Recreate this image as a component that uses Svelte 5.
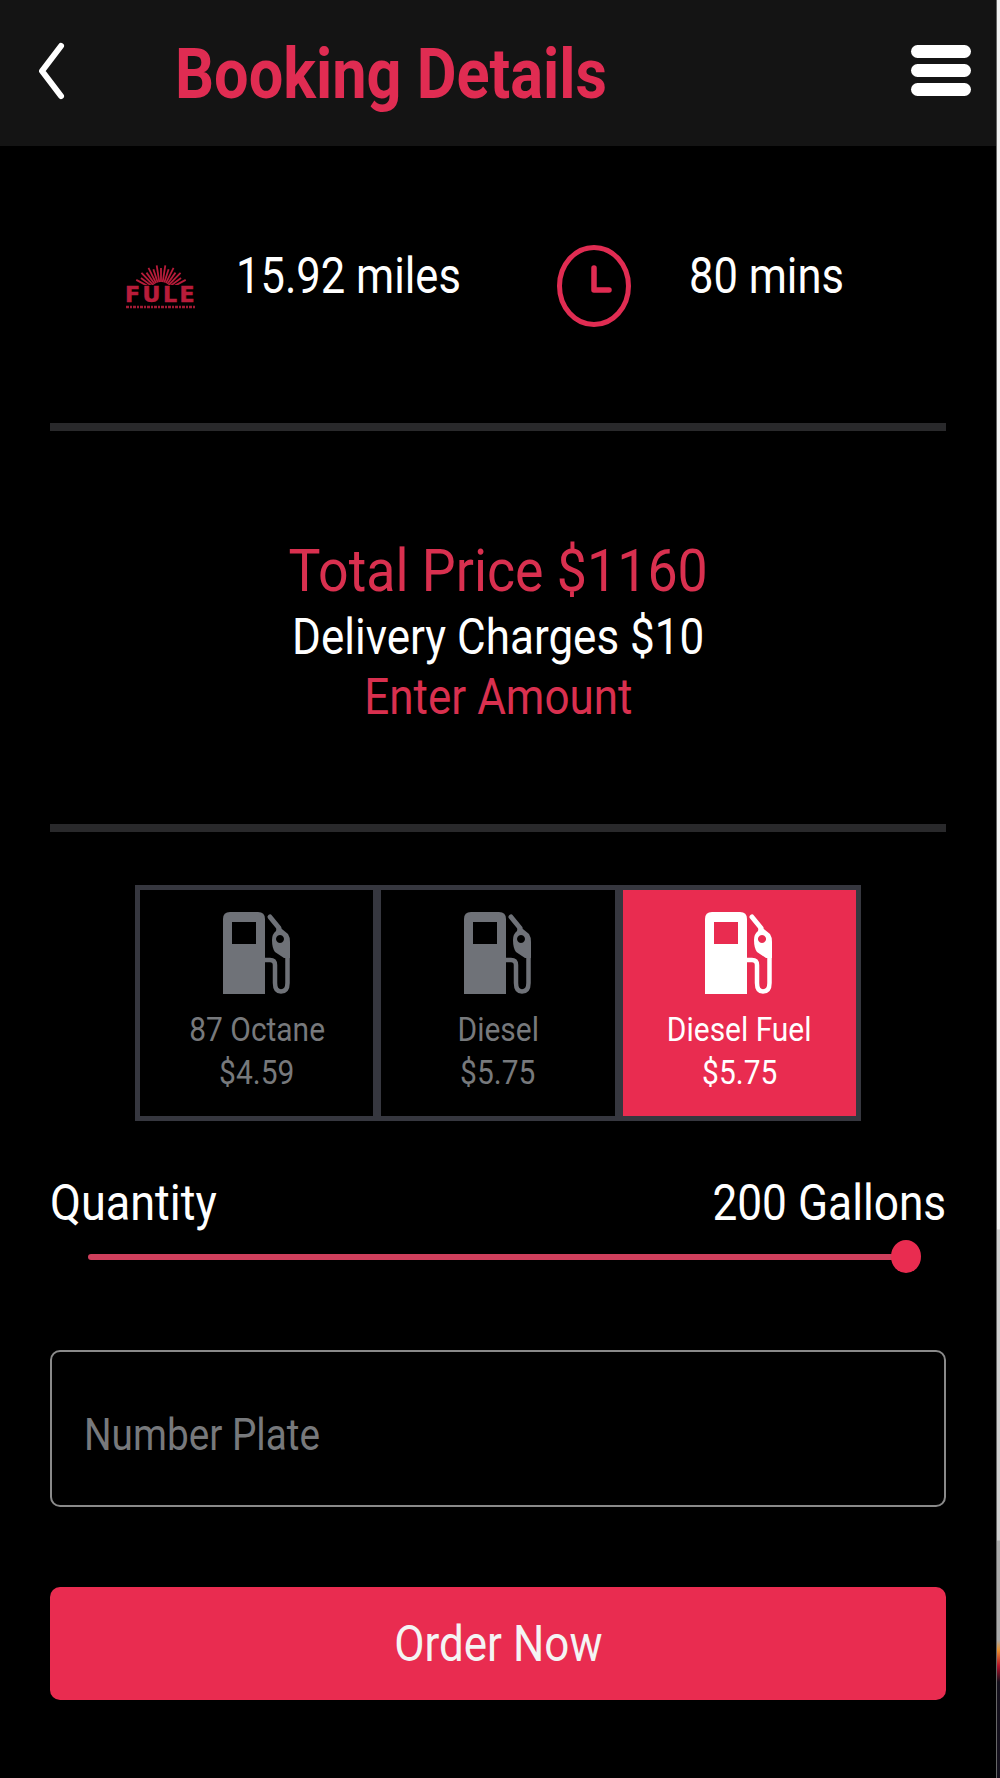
<script>
	const fuels = [
		{ name: '87 Octane', price: '$4.59', active: false },
		{ name: 'Diesel', price: '$5.75', active: false },
		{ name: 'Diesel Fuel', price: '$5.75', active: true }
	];

	// rays of the little sunburst in the logo
	const rays = Array.from({ length: 15 }, (_, i) => {
		const a = ((-152 + (i * 124) / 14) * Math.PI) / 180;
		return {
			x1: 36 + Math.cos(a) * 11,
			y1: 28 + Math.sin(a) * 11,
			x2: 36 + Math.cos(a) * (i % 2 ? 25 : 28),
			y2: 28 + Math.sin(a) * (i % 2 ? 25 : 28)
		};
	});
</script>

<div class="screen">
	<div class="page">
		<header class="topbar">
			<button class="back" aria-label="Back">
				<svg width="30" height="58" viewBox="0 0 30 58" fill="none">
					<path d="M25 4 L6 29 L25 54" stroke="#fff" stroke-width="6" stroke-linecap="round" stroke-linejoin="round" />
				</svg>
			</button>
			<h1><span class="narrow">Booking Details</span></h1>
			<div class="burger"><span></span><span></span><span></span></div>
		</header>

		<main class="content">
			<section class="stats">
				<div class="logo">
					<svg width="72" height="44" viewBox="0 0 72 44">
						{#each rays as r}
							<line x1={r.x1} y1={r.y1} x2={r.x2} y2={r.y2} stroke="#b81c3a" stroke-width="1.8" />
						{/each}
						<line x1="1" y1="42" x2="71" y2="42" stroke="#a01a34" stroke-width="2.5" stroke-dasharray="3 1 2 1" />
					</svg>
					<span class="logo-word">FULE</span>
				</div>
				<span class="stat miles narrow">15.92 miles</span>
				<svg class="clock" width="74" height="82" viewBox="0 0 74 82" fill="none">
					<ellipse cx="37" cy="41" rx="34.5" ry="38.5" stroke="#e02c52" stroke-width="5" />
					<path d="M37 23 V45 H52" stroke="#e02c52" stroke-width="5.5" stroke-linecap="round" stroke-linejoin="round" />
				</svg>
				<span class="stat mins narrow">80 mins</span>
			</section>

			<hr />

			<section class="totals">
				<div class="total"><span class="narrow mid">Total Price $1160</span></div>
				<div class="delivery"><span class="narrow mid">Delivery Charges $10</span></div>
				<div class="enter"><span class="narrow mid">Enter Amount</span></div>
			</section>

			<hr />

			<section class="fuels">
				{#each fuels as fuel}
					<div class="fuel" class:active={fuel.active}>
						<svg width="68" height="82" viewBox="0 0 68 82" fill="none">
							<path fill-rule="evenodd" fill="currentColor" d="M7 0 H35 Q42 0 42 7 V82 H0 V7 Q0 0 7 0 Z M9 10 V32 H33 V10 Z" />
							<path d="M47 5 L56 16" stroke="currentColor" stroke-width="5" stroke-linecap="round" />
							<path fill-rule="evenodd" fill="currentColor" d="M54 13 L65 22 Q67 25 67 30 V46 H61 L52 40 Q49 36 49 28 Q49 22 53 19 Z M57 23 a4 4 0 1 0 0.01 0 Z" />
							<path d="M42 48 H47 Q52 48 52 53 V71 Q52 79.5 58 79.5 Q64.5 79.5 64.5 71 V44" stroke="currentColor" stroke-width="4.5" stroke-linejoin="round" />
						</svg>
						<div class="fuel-name"><span class="narrow mid">{fuel.name}</span></div>
						<div class="fuel-price"><span class="narrow mid">{fuel.price}</span></div>
					</div>
				{/each}
			</section>

			<section class="quantity">
				<div class="quantity-row">
					<span class="narrow">Quantity</span>
					<span class="narrow end">200 Gallons</span>
				</div>
				<div class="slider">
					<div class="track"></div>
					<div class="thumb"></div>
				</div>
			</section>

			<div class="plate"><span class="narrow">Number Plate</span></div>

			<button class="order"><span class="narrow mid">Order Now</span></button>
		</main>
	</div>
	<div class="edge"></div>
</div>

<style>
	:global(body) {
		background: #000;
	}

	.screen {
		width: 1000px;
		height: 1778px;
		display: flex;
		background: #000;
		color: #fff;
		font-family: Roboto, sans-serif;
		overflow: hidden;
	}

	.page {
		flex: 1;
		min-width: 0;
	}

	.edge {
		width: 4px;
		border-left: 1px solid #666;
		box-sizing: border-box;
		background: linear-gradient(
			#f2f2f2 0,
			#f2f2f2 1229px,
			#cfcfcf 1230px,
			#cfcfcf 1540px,
			#aaa 1541px,
			#aaa 1640px,
			#e8912f 1650px,
			#b3122a 1666px,
			#14101c 1682px,
			#14101c 100%
		);
	}

	/* the type on this screen runs condensed */
	.narrow {
		display: inline-block;
		transform: scaleX(0.88);
		transform-origin: left center;
		white-space: nowrap;
	}

	.narrow.mid {
		transform-origin: center;
	}

	.narrow.end {
		transform-origin: right center;
	}

	.topbar {
		height: 146px;
		background: #141414;
		display: flex;
		align-items: center;
		padding: 0 25px 0 36px;
		box-sizing: border-box;
	}

	.back {
		background: none;
		border: 0;
		padding: 0;
		display: flex;
		margin-top: -4px;
	}

	h1 {
		margin: 2px 0 0 109px;
		color: #e02c52;
		font-size: 70px;
		font-weight: 700;
		flex: 1;
	}

	h1 .narrow {
		transform: scaleX(0.875);
	}

	.burger {
		width: 60px;
		display: flex;
		flex-direction: column;
		gap: 6px;
		margin-top: -5px;
	}

	.burger span {
		height: 13px;
		background: #fff;
		border-radius: 7px;
	}

	.content {
		padding: 0 50px;
	}

	.stats {
		height: 277px;
		display: flex;
		align-items: center;
		box-sizing: border-box;
		padding-left: 75px;
	}

	.logo {
		width: 72px;
		position: relative;
		height: 44px;
		margin-top: 5px;
		color: #b81c3a;
	}

	.logo-word {
		position: absolute;
		left: 0;
		right: 0;
		top: 20px;
		text-align: center;
		font: 700 22px/20px "DejaVu Sans", sans-serif;
		letter-spacing: 2.5px;
		-webkit-text-stroke: 0.6px #b81c3a;
		background: #000;
		height: 19px;
	}

	.stat {
		font-size: 50px;
		margin-top: -17px;
	}

	.stat.narrow {
		transform: scaleX(0.87);
	}

	.miles {
		margin-left: 39px;
	}

	.clock {
		margin: 3px 0 0 63px;
	}

	.mins {
		margin-left: 58px;
	}

	hr {
		margin: 0;
		border: 0;
		height: 8px;
		background: #29292b;
	}

	.totals {
		height: 393px;
		display: flex;
		flex-direction: column;
		align-items: center;
		justify-content: center;
		padding-top: 7px;
		box-sizing: border-box;
	}

	.total {
		color: #d9304f;
		font-size: 60px;
		line-height: 70px;
	}

	.total .narrow {
		transform: scaleX(0.895);
	}

	.delivery {
		font-size: 50px;
		line-height: 62px;
	}

	.enter {
		color: #d9304f;
		font-size: 50px;
		line-height: 58px;
	}

	.fuels {
		width: 726px;
		margin: 53px auto 0;
		display: grid;
		grid-template-columns: repeat(3, 1fr);
		gap: 8px;
		padding: 5px;
		background: #36373f;
		box-sizing: border-box;
	}

	.fuel {
		background: #000;
		height: 226px;
		color: #6f7278;
		display: flex;
		flex-direction: column;
		align-items: center;
		padding-top: 22px;
		box-sizing: border-box;
	}

	.fuel.active {
		background: #e92c50;
		color: #fff;
	}

	.fuel-name,
	.fuel-price {
		font-size: 34px;
		line-height: 43px;
		color: #77797c;
	}

	.fuel-name {
		margin-top: 14px;
	}

	.active .fuel-name,
	.active .fuel-price {
		color: #fff;
	}

	.quantity {
		margin-top: 54px;
	}

	.quantity-row {
		display: flex;
		justify-content: space-between;
		font-size: 50px;
		line-height: 56px;
	}

	.quantity-row .narrow {
		transform: scaleX(0.9);
	}

	.quantity-row .narrow.end {
		transform: scaleX(0.885);
	}

	.slider {
		position: relative;
		height: 33px;
		margin: 9px 40px 0 38px;
		display: flex;
		align-items: center;
	}

	.track {
		height: 6px;
		width: 100%;
		background: #cf3f5c;
		border-radius: 3px;
	}

	.thumb {
		position: absolute;
		right: -15px;
		top: 0;
		width: 30px;
		height: 33px;
		border-radius: 50%;
		background: #e92c50;
	}

	.plate {
		height: 157px;
		margin-top: 77px;
		box-sizing: border-box;
		border: 2px solid #8a8a8a;
		border-radius: 10px;
		padding: 12px 32px 0;
		display: flex;
		align-items: center;
		font-size: 44px;
		color: #77797c;
	}

	.order {
		display: block;
		width: 100%;
		height: 113px;
		margin-top: 80px;
		background: #e92c50;
		color: #f4f4f4;
		border: 0;
		border-radius: 10px;
		font: 400 50px Roboto, sans-serif;
	}
</style>
